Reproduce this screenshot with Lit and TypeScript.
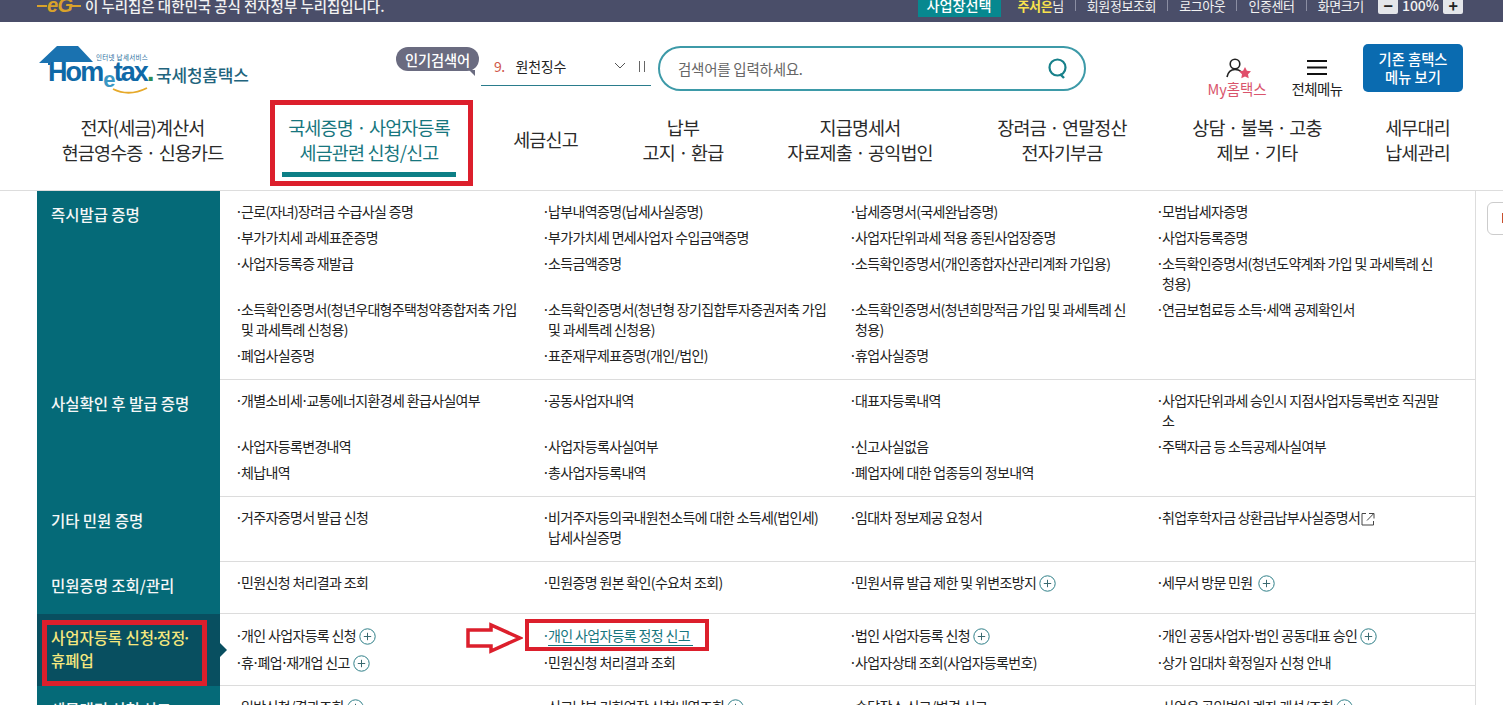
import { LitElement, html, css, svg } from "lit";
import { customElement } from "lit/decorators.js";

type Item = { t: string; plus?: boolean; ext?: boolean; cur?: boolean };
type Row = { title: string; title2?: string; cls: string; active?: boolean; cols: Item[][] };

const i = (t: string, plus = false): Item => ({ t, plus });

const ROWS: Row[] = [
  {
    title: "즉시발급 증명",
    cls: "r1",
    cols: [
      [i("근로(자녀)장려금 수급사실 증명"), i("납부내역증명(납세사실증명)"), i("납세증명서(국세완납증명)"), i("모범납세자증명")],
      [i("부가가치세 과세표준증명"), i("부가가치세 면세사업자 수입금액증명"), i("사업자단위과세 적용 종된사업장증명"), i("사업자등록증명")],
      [i("사업자등록증 재발급"), i("소득금액증명"), i("소득확인증명서(개인종합자산관리계좌 가입용)"), i("소득확인증명서(청년도약계좌 가입 및 과세특례 신청용)")],
      [i("소득확인증명서(청년우대형주택청약종합저축 가입 및 과세특례 신청용)"), i("소득확인증명서(청년형 장기집합투자증권저축 가입 및 과세특례 신청용)"), i("소득확인증명서(청년희망적금 가입 및 과세특례 신청용)"), i("연금보험료등 소득·세액 공제확인서")],
      [i("폐업사실증명"), i("표준재무제표증명(개인/법인)"), i("휴업사실증명"), i("")],
    ],
  },
  {
    title: "사실확인 후 발급 증명",
    cls: "r2",
    cols: [
      [i("개별소비세·교통에너지환경세 환급사실여부"), i("공동사업자내역"), i("대표자등록내역"), i("사업자단위과세 승인시 지점사업자등록번호 직권말소")],
      [i("사업자등록변경내역"), i("사업자등록사실여부"), i("신고사실없음"), i("주택자금 등 소득공제사실여부")],
      [i("체납내역"), i("총사업자등록내역"), i("폐업자에 대한 업종등의 정보내역"), i("")],
    ],
  },
  {
    title: "기타 민원 증명",
    cls: "r3",
    cols: [
      [i("거주자증명서 발급 신청"), i("비거주자등의국내원천소득에 대한 소득세(법인세) 납세사실증명"), i("임대차 정보제공 요청서"), { t: "취업후학자금 상환금납부사실증명서", ext: true }],
    ],
  },
  {
    title: "민원증명 조회/관리",
    cls: "r4",
    cols: [
      [i("민원신청 처리결과 조회"), i("민원증명 원본 확인(수요처 조회)"), i("민원서류 발급 제한 및 위변조방지", true), i("세무서 방문 민원 ", true)],
    ],
  },
  {
    title: "사업자등록 신청·정정·",
    title2: "휴폐업",
    cls: "r5",
    active: true,
    cols: [
      [i("개인 사업자등록 신청", true), { t: "개인 사업자등록 정정 신고", cur: true }, i("법인 사업자등록 신청", true), i("개인 공동사업자·법인 공동대표 승인", true)],
      [i("휴·폐업·재개업 신고", true), i("민원신청 처리결과 조회"), i("사업자상태 조회(사업자등록번호)"), i("상가 임대차 확정일자 신청 안내")],
    ],
  },
  {
    title: "세무대리 신청·신고",
    cls: "r6",
    cols: [
      [i("일반신청/결과조회", true), i("신고납부 기한연장 신청내역조회", true), i("송달장소 신고/변경 신고"), i("사업용 공인범인 계좌 개설/조회", true)],
    ],
  },
];

const NAV: { a: string; b?: string; on?: boolean }[] = [
  { a: "전자(세금)계산서", b: "현금영수증 · 신용카드" },
  { a: "국세증명 · 사업자등록", b: "세금관련 신청/신고", on: true },
  { a: "세금신고" },
  { a: "납부", b: "고지 · 환급" },
  { a: "지급명세서", b: "자료제출 · 공익법인" },
  { a: "장려금 · 연말정산", b: "전자기부금" },
  { a: "상담 · 불복 · 고충", b: "제보 · 기타" },
  { a: "세무대리", b: "납세관리" },
];

const plusIcon = svg`<svg class="plus" viewBox="0 0 17 17" width="17" height="17"><circle cx="8.5" cy="8.5" r="7.7" fill="none" stroke="#2f7f88" stroke-width="1"/><path d="M4.8 8.5h7.4M8.5 4.8v7.4" stroke="#3b6a70" stroke-width="1"/></svg>`;
const extIcon = svg`<svg class="ext" viewBox="0 0 14 14" width="14" height="14"><path d="M5 1.5H1v11.5h11.5V9" fill="none" stroke="#444" stroke-width="1"/><path d="M6 8.5 12.5 1.8M8 1.5h5v5" fill="none" stroke="#444" stroke-width="1"/></svg>`;

const dots = (t: string) => {
  const parts = t.split("·");
  return parts.map((p, k) => (k < parts.length - 1 ? html`${p}<span class="md">·</span>` : p));
};

@customElement("app-root")
export class AppRoot extends LitElement {
  static styles = css`
    :host {
      display: block;
      position: relative;
      width: 1503px;
      height: 705px;
      overflow: hidden;
      background: #fff;
      font-family: "Noto Sans CJK KR", "Noto Sans", sans-serif;
      color: #222;
      letter-spacing: -0.6px;
    }
    .top {
      height: 22px;
      background: #4a4e69;
      color: #f2f2f2;
      display: flex;
      align-items: center;
      padding: 0 40px 0 37px;
      font-size: 14.5px;
      overflow: hidden;
    }
    .top .lines { position: relative; top: -6px; display: flex; align-items: center; }
    .eg { width: 44px; height: 18px; margin-right: 4px; flex: none; }
    .top .msg { font-weight: 500; letter-spacing: -0.05px; white-space: nowrap; }
    .grow { flex: 1; }
    .top-right { display: flex; align-items: center; font-size: 13px; white-space: nowrap; position: relative; top: -6px; letter-spacing: -0.4px; }
    .sel { background: #07888f; color: #fff; height: 23px; width: 83px; display: flex; align-items: center; justify-content: center; font-size: 14.2px; font-weight: 500; margin-right: 17px; letter-spacing: 0; }
    .who b { color: #f8e24d; font-weight: 700; }
    .sep { width: 1px; height: 11px; background: #8b8ea3; margin: 0 11px; }
    .zoom { width: 20px; height: 17px; background: #e4e6ea; color: #222; border-radius: 2px; display: flex; align-items: center; justify-content: center; font-size: 16px; font-weight: 700; line-height: 1; }
    .zoom.first { margin-left: 14px; }
    .pct { margin: 0 4px; font-weight: 500; font-size: 14px; letter-spacing: 0; }

    .head { height: 76px; display: flex; position: relative; align-items: flex-start; }
    .logo { margin: 23px 0 0 38px; width: 215px; height: 50px; flex: none; position: relative; }
    .logo svg { display: block; }
    .logo .h { position: absolute; left: 10px; top: 16.5px; font: 700 27px/20px "Liberation Sans", sans-serif; color: #0f69a7; letter-spacing: -1.9px; white-space: nowrap; }
    .logo .e { color: #3a97c4; font-size: 22px; position: relative; top: 6px; margin: 0 0 0 1px; }
    .logo .dot { color: #2e8b57; }
    .logo .sub { position: absolute; left: 58px; top: 9px; font-size: 6.5px; line-height: 1; color: #1d6a9c; letter-spacing: 0.3px; white-space: nowrap; }
    .logo .kr { position: absolute; left: 118px; top: 18px; font-size: 17px; line-height: 24px; font-weight: 500; color: #22647d; letter-spacing: -0.2px; white-space: nowrap; }

    .pop { margin: 25px 0 0 143px; width: 83px; height: 24px; border-radius: 12px; background: #6a6b80; color: #fff; font-size: 14.3px; font-weight: 500; display: flex; align-items: center; justify-content: center; position: relative; flex: none; letter-spacing: -0.2px; }
    .pop::after { content: ""; position: absolute; right: 4px; bottom: -5px; border-left: 6px solid transparent; border-top: 6px solid #6a6b80; }
    .rolling { margin: 25px 0 0 2px; width: 170px; height: 38px; border-bottom: 1px solid #2a7c8c; display: flex; align-items: center; font-size: 14px; flex: none; box-sizing: content-box; }
    .rolling .n { color: #d0574a; margin: 0 11px 0 13px; }
    .rolling .t { flex: 1; letter-spacing: -0.2px; }
    .chev { margin-right: 12px; }
    .bars { margin-right: 5px; }
    .search { margin: 24px 0 0 7px; width: 428px; height: 45px; box-sizing: border-box; border: 2px solid #3d9aa8; border-radius: 23px; display: flex; align-items: center; padding: 0 16px 0 18px; flex: none; color: #666; font-size: 14.5px; letter-spacing: -0.25px; justify-content: space-between; }
    .my { margin: 36px 0 0 120px; width: 62px; display: flex; flex-direction: column; align-items: center; flex: none; font-size: 14.5px; color: #d9546c; line-height: 16px; letter-spacing: -0.1px; white-space: nowrap; }
    .all { margin: 37px 0 0 18px; width: 62px; display: flex; flex-direction: column; align-items: center; flex: none; font-size: 14.5px; color: #222; line-height: 16px; white-space: nowrap; }
    .all svg { margin-bottom: 6px; }
    .old { margin: 22px 0 0 15px; width: 100px; height: 48px; background: #0a6bb0; color: #fff; border-radius: 5px; display: flex; flex-direction: column; align-items: center; justify-content: center; font-size: 14.3px; font-weight: 500; line-height: 18px; flex: none; letter-spacing: 0; }

    nav { height: 92px; display: flex; align-items: flex-start; border-bottom: 1px solid #ddd; }
    .nv { text-align: center; font-size: 18.5px; line-height: 25px; padding-top: 17px; white-space: nowrap; letter-spacing: -0.85px; color: #2b2b2b; position: relative; flex: none; }
    .nv.on { color: #17767e; }
    .nv .single { padding-top: 12px; }
    .box { position: absolute; left: -17px; right: -22px; top: 2px; height: 86px; border: 5px solid #dc1f2c; box-sizing: border-box; pointer-events: none; }
    .ul { position: absolute; left: -5px; right: -5px; top: 74px; height: 5px; background: #0d7f86; }

    .panel { margin-left: 37px; width: 1438px; border-right: 1px solid #ddd; height: 600px; overflow: hidden; }
    .row { display: flex; }
    .row .ttl { width: 183px; flex: none; background: #056a78; color: #f5f7f7; font-size: 15.5px; line-height: 22px; font-weight: 500; padding: 12px 14px; box-sizing: border-box; letter-spacing: -0.05px; position: relative; white-space: nowrap; }
    .row.active .ttl { background: #084f60; color: #f5e87e; line-height: 23px; }
    .row.active .ttl::after { content: ""; position: absolute; right: -7px; top: 50%; margin-top: -7px; border-left: 7px solid #084f60; border-top: 7px solid transparent; border-bottom: 7px solid transparent; z-index: 1; }
    .red { position: absolute; left: 5px; right: 13px; top: 6px; bottom: 0; border: 5px solid #dc1f2c; }
    .cells { flex: 1; min-width: 0; border-bottom: 1px solid #dcdcdc; padding: 7px 0 11px; display: flex; flex-direction: column; }
    .row.r4 .cells { padding-bottom: 18px; }
    .row.r5 .cells { padding: 8px 0 9px; }
    .row.r5 .cell { padding-bottom: 4px; }
    .line { display: flex; }
    .cell { flex: none; width: 307px; box-sizing: border-box; padding: 3px 4px 3px 21px; font-size: 14px; line-height: 20px; position: relative; color: #222; word-break: break-all; letter-spacing: -0.65px; }
    .cell::before { content: "·"; position: absolute; margin-left: -6px; }
    .cell.empty::before { content: ""; }
    .cell.cur { color: #17767e; }
    .md { margin: 0 -1.5px; }
    .ttl .md { margin: 0 -3px; }
    .plus { vertical-align: -4px; margin-left: 3px; }
    .ext { vertical-align: -3px; margin-left: 1px; }
    .cur-box { position: absolute; left: -2px; top: -3px; width: 184px; height: 32px; border: 4px solid #dc1f2c; box-sizing: border-box; pointer-events: none; }
    .arrow { position: absolute; left: -62px; top: 0; }
    .uline { position: absolute; left: 21px; top: 23px; width: 145px; height: 1px; background: #17767e; }
    .side { position: absolute; left: 1487px; top: 202px; width: 30px; height: 33px; box-sizing: border-box; border: 1px solid #ccc; border-radius: 6px; background: #fff; }
    .side::after { content: ""; position: absolute; left: 14px; top: 10px; width: 3px; height: 10px; background: #c9502f; }
  `;

  private navWidths = [165, 164, 65, 82, 148, 132, 132, 65];
  private navGaps = [60, 62, 62, 64, 62, 62, 63, 62];

  render() {
    return html`
      <div class="top">
        <div class="lines">
          <svg class="eg" viewBox="0 0 44 18"><path d="M0 10h10M33 10h11" stroke="#d9a22b" stroke-width="2"/><text x="10" y="16" font-family="Liberation Sans" font-size="20" font-weight="700" font-style="italic" fill="#d9a22b">eG</text></svg>
          <span class="msg">이 누리집은 대한민국 공식 전자정부 누리집입니다.</span>
        </div>
        <div class="grow"></div>
        <div class="top-right">
          <span class="sel">사업장선택</span>
          <span class="who"><b>주서은</b>님</span><i class="sep"></i>
          <span>회원정보조회</span><i class="sep"></i>
          <span>로그아웃</span><i class="sep"></i>
          <span>인증센터</span><i class="sep"></i>
          <span>화면크기</span>
          <span class="zoom first">−</span><span class="pct">100%</span><span class="zoom">+</span>
        </div>
      </div>

      <div class="head">
        <div class="logo">
          <svg width="120" height="50" viewBox="0 0 120 50"><path d="M1 18 19 1h21l15 16H12v3H10v-2z" fill="#1a72b0"/><path d="M75 44q16 8 34-1" fill="none" stroke="#e6a92a" stroke-width="1.8"/></svg>
          <span class="sub">인터넷 납세서비스</span>
          <span class="h">Hom<span class="e">e</span>tax<span class="dot">.</span></span>
          <span class="kr">국세청홈택스</span>
        </div>
        <div class="pop">인기검색어</div>
        <div class="rolling"><span class="n">9.</span><span class="t">원천징수</span>
          <svg class="chev" width="12" height="8" viewBox="0 0 12 8"><path d="M1 1l5 5 5-5" fill="none" stroke="#555" stroke-width="1"/></svg>
          <svg class="bars" width="8" height="11" viewBox="0 0 8 11"><path d="M1.5 0v11M6.5 0v11" stroke="#666" stroke-width="1"/></svg>
        </div>
        <div class="search"><span>검색어를 입력하세요.</span>
          <svg width="20" height="22" viewBox="0 0 20 22"><circle cx="9.5" cy="9.5" r="8" fill="none" stroke="#17808a" stroke-width="2.2"/><path d="M12 16l4 4" stroke="#17808a" stroke-width="2.4"/></svg>
        </div>
        <div class="my">
          <svg width="28" height="23" viewBox="0 0 28 23"><circle cx="12" cy="6" r="4.8" fill="none" stroke="#222" stroke-width="1.6"/><path d="M4 19c1-5 4-7.5 8-7.5 2.500 0 4.500.7 6 2" fill="none" stroke="#222" stroke-width="1.6"/><path d="M22 9l1.900 3.700 4.100.6-3 2.900.7 4.100-3.700-1.900-3.700 1.900.7-4.100-3-2.900 4.100-.6z" fill="#e04f6b"/></svg>
          My홈택스</div>
        <div class="all">
          <svg width="22" height="16" viewBox="0 0 22 16"><path d="M1 2h20M1 8.500h20M1 15h20" stroke="#111" stroke-width="2"/></svg>
          전체메뉴</div>
        <div class="old"><span>기존 홈택스</span><span>메뉴 보기</span></div>
      </div>

      <nav>
        ${NAV.map((n, k) => html`<div class="nv ${n.on ? "on" : ""}" style="margin-left:${this.navGaps[k]}px;width:${this.navWidths[k]}px">
          ${n.b ? html`${n.a}<br />${n.b}` : html`<div class="single">${n.a}</div>`}
          ${n.on ? html`<i class="ul"></i><i class="box"></i>` : ""}
        </div>`)}
      </nav>

      <div class="panel">
        ${ROWS.map(
          (r) => html`<div class="row ${r.cls} ${r.active ? "active" : ""}">
            <div class="ttl">${dots(r.title)}${r.title2 ? html`<br />${r.title2}` : ""}${r.active ? html`<i class="red"></i>` : ""}</div>
            <div class="cells">
              ${r.cols.map(
                (l) => html`<div class="line">
                  ${l.map(
                    (c) => html`<div class="cell ${c.t ? "" : "empty"} ${c.cur ? "cur" : ""}">
                      ${dots(c.t)}${c.plus ? plusIcon : ""}${c.ext ? extIcon : ""}
                      ${c.cur
                        ? html`<i class="uline"></i><i class="cur-box"></i>
                            <svg class="arrow" width="58" height="32" viewBox="0 0 58 32"><path d="M3 8H26V3L55 16 26 29V24H3Z" fill="#fff" stroke="#dc1f2c" stroke-width="3.500"/></svg>`
                        : ""}
                    </div>`
                  )}
                </div>`
              )}
            </div>
          </div>`
        )}
      </div>
      <div class="side"></div>
    `;
  }
}
